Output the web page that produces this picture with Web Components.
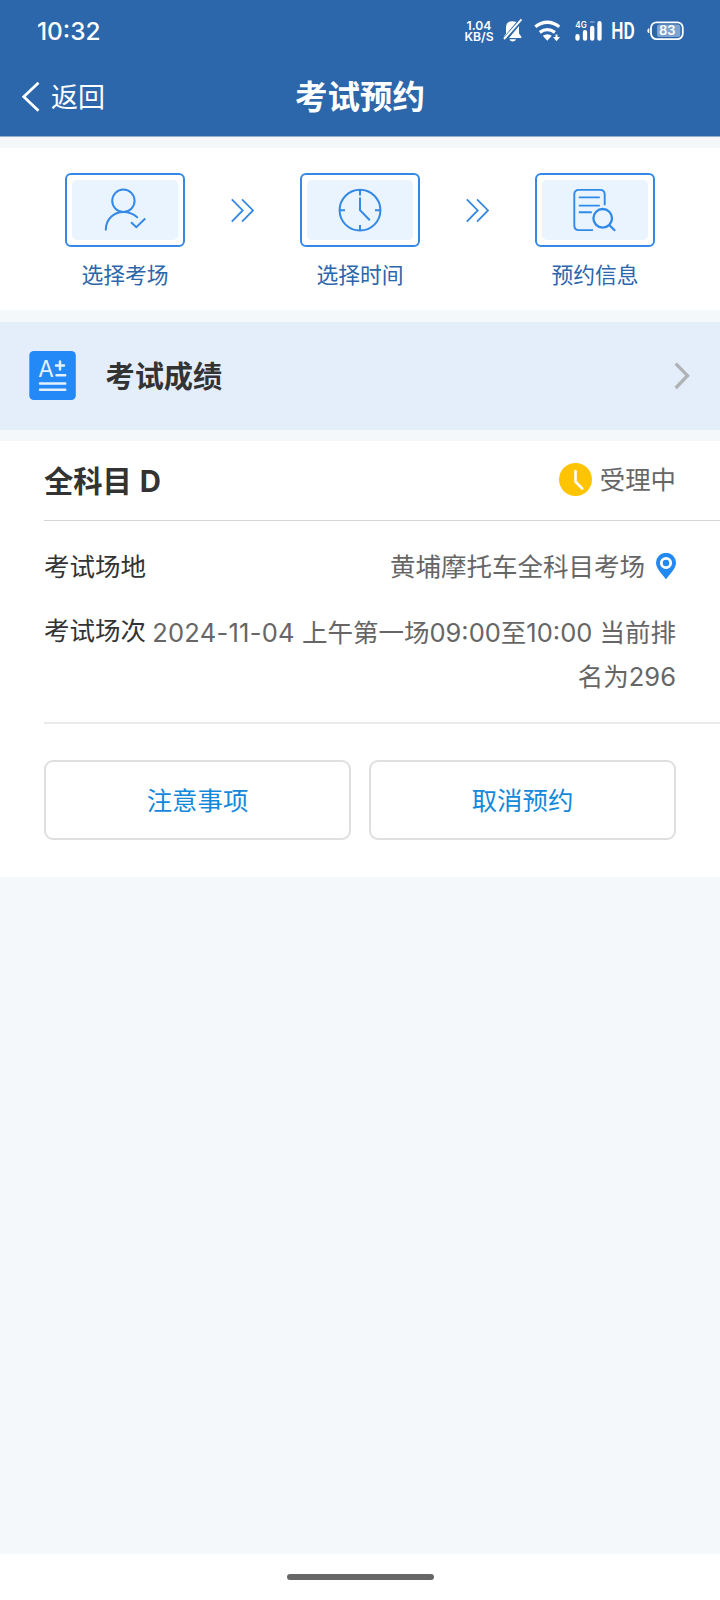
<!DOCTYPE html>
<html lang="zh-CN">
<head>
<meta charset="utf-8">
<title>考试预约</title>
<style>
html,body{margin:0;padding:0}
body{width:720px;height:1600px;overflow:hidden;background:#f4f8fa;font-family:Inter,"Noto Sans CJK SC",sans-serif;color:#333}
</style>
</head>
<body>
<exam-app></exam-app>
<script>
const define = (name, html) => customElements.define(name, class extends HTMLElement {
  constructor() {
    super();
    this.attachShadow({ mode: 'open' }).innerHTML = `<style>*{box-sizing:border-box}svg{display:block;flex:none}</style>` + html;
  }
});

define('status-bar', `
<style>
:host{display:flex;height:58px;padding:4px 36px 0 37px;align-items:center;color:#fff}
.time{font-size:24.4px;font-weight:500;line-height:30px;flex:1}
.icons{display:flex;align-items:center}
.rate{width:30px;margin-right:9px;text-align:center;font-weight:600;font-size:12.2px;line-height:11px}
text{fill:#fff;font-family:Inter,sans-serif}
</style>
<span class="time">10:32</span>
<div class="icons">
<div class="rate">1.04<br>KB/S</div>
<svg width="181" height="30" viewBox="503 16 181 30">
  <path fill="#fff" d="M503.800 37 V36.500 L506 33.500 V27.500 Q506 21.200 512.500 21.200 Q514.500 21.200 516.500 22 Z M519 26 L509 38 H521.300 V36.500 L519 33.500 Z M509.500 39.200 H516 Q515.500 41.600 512.700 41.600 Q510 41.600 509.500 39.200 Z"/>
  <path stroke="#fff" stroke-width="1.900" d="M521.500 19.300 L504 39"/>
  <g fill="none" stroke="#fff" stroke-width="3.300">
    <path d="M535.300 26.800 Q547.300 17.800 559.300 26.800"/>
    <path d="M539.800 32.400 Q547.300 26.900 554.900 32.400"/>
  </g>
  <path fill="#fff" d="M542.800 35.800 Q547.300 32.800 551.800 35.800 L547.300 40.800 Z M555.500 34.500 H557.500 V37 H560 L556.500 41.200 L553 37 H555.500 Z"/>
  <text x="575.300" y="28" font-size="8.500" font-weight="600" textLength="11.500" lengthAdjust="spacingAndGlyphs">4G</text>
  <g stroke="#fff" stroke-width="4.300" stroke-linecap="round"><path d="M577.500 36.200V38.700M585 32.200V38.700M592.200 28V38.700M599.500 23.200V38.700"/></g>
  <path d="M590 22H594.500" stroke="#7f9fcb" stroke-width="1.600"/>
  <text x="611.200" y="39.200" font-size="23.500" font-weight="600" textLength="23.500" lengthAdjust="spacingAndGlyphs" style="font-family:Roboto,sans-serif">HD</text>
  <rect x="651" y="22.300" width="31.800" height="16.800" rx="5.500" fill="none" stroke="#fff" stroke-width="1.800"/>
  <rect x="657" y="24.400" width="23.300" height="12.600" rx="2.500" fill="#7fa3d0"/>
  <path d="M649.300 28 Q647.300 28.500 647.300 30.700 Q647.300 33 649.300 33.300 Z" fill="#fff"/>
  <text x="659" y="35.300" font-size="12.800" font-weight="600" textLength="16.500" lengthAdjust="spacingAndGlyphs">83</text>
</svg></div>`);

define('nav-bar', `
<style>
:host{display:grid;grid-template-columns:1fr auto 1fr;align-items:center;height:78px;padding:0 22px;color:#fff}
.back{display:flex;align-items:center;gap:11px;font-size:27px;line-height:32px}
.back span{padding-top:1px}
h1{margin:0;padding-top:2px;font-size:32.5px;line-height:40px;font-weight:700}
</style>
<div class="back"><svg width="18" height="32" viewBox="22 80.500 18 32"><path d="M38.500 82.200 L23.700 96.300 L38.500 110.300" fill="none" stroke="#fff" stroke-width="2.800"/></svg><span><slot name="back"></slot></span></div>
<h1><slot></slot></h1>`);

define('step-item', `
<style>
:host{display:flex;flex-direction:column;align-items:center;width:120px}
span{margin-top:13px;font-size:21.800px;line-height:30px;color:#2c66ab}
.box{display:flex;width:120px;height:74px;border:2px solid #3489e4;border-radius:6px;padding:5px}
.in{flex:1;display:flex;align-items:center;justify-content:center;background:#eaf4ff;border-radius:5px}
</style>
<div class="box"><div class="in"><slot name="icon"></slot></div></div><span><slot></slot></span>`);

const icon = (name, box, body) => {
  const [, , w, h] = box.split(' ');
  define(name, `<style>:host{display:block;flex:none}</style><svg width="${w}" height="${h}" viewBox="${box}" fill="none">${body}</svg>`);
};
icon('icon-person', '101 185.500 48 48', `<g stroke="#3489e4" stroke-width="2"><circle cx="123.400" cy="200.300" r="11.200"/><path stroke-linecap="round" d="M105.800 229.300 C105.800 219 113.500 211.500 123.500 211.500 C129 211.500 133.500 213.500 137.200 216.800"/><path d="M131 221.800 L136.300 226.700 L145.200 218"/></g>`);
icon('icon-clock', '336 185.500 48 48', `<g stroke="#3489e4" stroke-width="2"><circle cx="360" cy="209.700" r="20.400"/><path d="M360 189.500V195M360 224.500V230M339.500 209.700H345M375 209.700H380.500M360 197V209.700L369.800 219.800"/></g>`);
icon('icon-search-doc', '571.500 185.500 48 48', `<g stroke="#2f8ae8" stroke-width="1.900"><path d="M605.200 204.800V194Q605.200 189.400 600.500 189.400H579.500Q574.800 189.400 574.800 194V225Q574.800 229.600 579.500 229.600H593.500M579.300 196.900H600.300M579.300 205.100H600.300M579.300 211.700H592.300"/><g stroke-width="2.300"><circle cx="603.200" cy="217.800" r="9.300"/><path d="M609.500 224.200L615.600 230.200"/></g></g>`);
icon('icon-double', '231 198 24 25', `<path stroke="#3489e4" stroke-width="1.800" d="M231.800 199.300L242.700 210.400L231.800 221.600M242 199.300L253 210.400L242 221.600"/>`);
icon('icon-score', '29 351 47 49', `<rect x="29.300" y="351" width="46.500" height="49" rx="4.500" fill="#2289f7"/><text x="38.300" y="377" font-size="22.500" font-weight="400" fill="#e4f1ff" font-family="Inter,sans-serif" textLength="15.500" lengthAdjust="spacingAndGlyphs">A</text><path stroke="#e4f1ff" stroke-width="2.500" stroke-linecap="round" d="M56 365.500H64M60 361.500V369.500M56.500 375.200H65.200M40 383.400H65.200M40 389.800H65.200"/>`);
icon('icon-next', '674 362 17 28', `<path stroke="#b0b2b3" stroke-width="3.300" d="M675.700 363.600L687.500 375.700L675.700 388"/>`);
icon('icon-pending', '559 463 33 33', `<circle cx="575.500" cy="479.500" r="16.500" fill="#ffc400"/><path stroke="#fff" stroke-width="2.600" stroke-linecap="round" d="M575.500 471V481.700L582.200 488.500"/>`);
icon('icon-pin', '656 553 20 26', `<path fill="#2289f0" d="M666 579.300C662 574 656 568.500 656 562.800A10 10 0 0 1 676 562.800C676 568.500 670 574 666 579.300Z"/><circle cx="666" cy="563" r="4.700" stroke="#fff" stroke-width="2.800"/>`);

define('step-flow', `
<style>
:host{display:flex;justify-content:space-between;background:#fff;height:162px;margin-top:12px;padding:25px 65px 0}
icon-double{margin-top:25px}
</style>
<step-item><icon-person slot="icon"></icon-person>选择考场</step-item>
<icon-double></icon-double>
<step-item><icon-clock slot="icon"></icon-clock>选择时间</step-item>
<icon-double></icon-double>
<step-item><icon-search-doc slot="icon"></icon-search-doc>预约信息</step-item>`);

define('score-row', `
<style>
:host{display:flex;align-items:center;height:108px;margin-top:12px;padding:0 29px;background:#e3eefa}
icon-score{margin-bottom:2px}
b{flex:1;margin-left:29.500px;padding-top:2px;font-size:29.200px;line-height:40px}
</style>
<icon-score></icon-score><b><slot></slot></b><icon-next></icon-next>`);

define('outline-button', `
<style>
:host{display:block;flex:1}
button{display:block;width:100%;height:80px;padding:2px 0 0;border:2px solid #dedfe0;border-radius:9px;background:#fff;color:#1389db;font:400 25.400px/74px Inter,"Noto Sans CJK SC",sans-serif}
</style><button><slot></slot></button>`);

define('info-row', `
<style>
:host{display:flex;align-items:flex-start;justify-content:space-between;font-size:25.500px;line-height:44.600px;padding-right:44px}
.k{flex:none;color:#333}
.v{display:flex;align-items:center;gap:11px;color:#666;text-align:right}
</style><span class="k"><slot name="label"></slot></span><div class="v"><span><slot></slot></span><slot name="icon"></slot></div>`);

define('booking-card', `
<style>
:host{display:block;height:436px;margin-top:11px;padding-left:44px;background:#fff}
header{display:flex;align-items:center;justify-content:space-between;height:80px;padding:0 44px 1px 0;border-bottom:1px solid #d3d4d5}
h2{margin:0;padding-top:4px;font:700 29.300px/40px Inter,"Noto Sans CJK SC",sans-serif;word-spacing:1px}
.state{display:flex;align-items:center;gap:8px;font-size:25.400px;line-height:36px;color:#666}
icon-pending{margin-bottom:2px}
.rows{height:203px;padding-top:24px;border-bottom:2px solid #ebebeb}
icon-pin{margin-bottom:2px}
.session{margin-top:19.500px}
.session>span:last-child{display:block;padding-top:1.500px}
.date{letter-spacing:.25px}
.actions{display:flex;gap:18px;padding:36px 44px 0 0}
</style>
<header><h2>全科目 D</h2><div class="state"><icon-pending></icon-pending><span>受理中</span></div></header>
<div class="rows">
<info-row><span slot="label">考试场地</span>黄埔摩托车全科目考场<icon-pin slot="icon"></icon-pin></info-row>
<info-row class="session"><span slot="label">考试场次</span><span><span class="date">2024-11-04</span> 上午第一场09:00至10:00 当前排<br>名为296</span></info-row>
</div>
<div class="actions"><outline-button>注意事项</outline-button><outline-button>取消预约</outline-button></div>`);

define('home-indicator', `
<style>
:host{display:flex;justify-content:center;height:46px;margin-top:auto;padding-top:20px;background:#fff}
i{width:147px;height:6px;border-radius:3px;background:#666}
</style><i></i>`);

define('exam-app', `
<style>
:host{display:flex;flex-direction:column;width:720px;height:1600px;background:#f4f8fa}
.top{background:#2c66ab;height:136px;box-shadow:0 1px #94aed4}
</style>
<div class="top"><status-bar></status-bar><nav-bar><span slot="back">返回</span>考试预约</nav-bar></div>
<step-flow></step-flow>
<score-row>考试成绩</score-row>
<booking-card></booking-card>
<home-indicator></home-indicator>`);
</script>
</body>
</html>
